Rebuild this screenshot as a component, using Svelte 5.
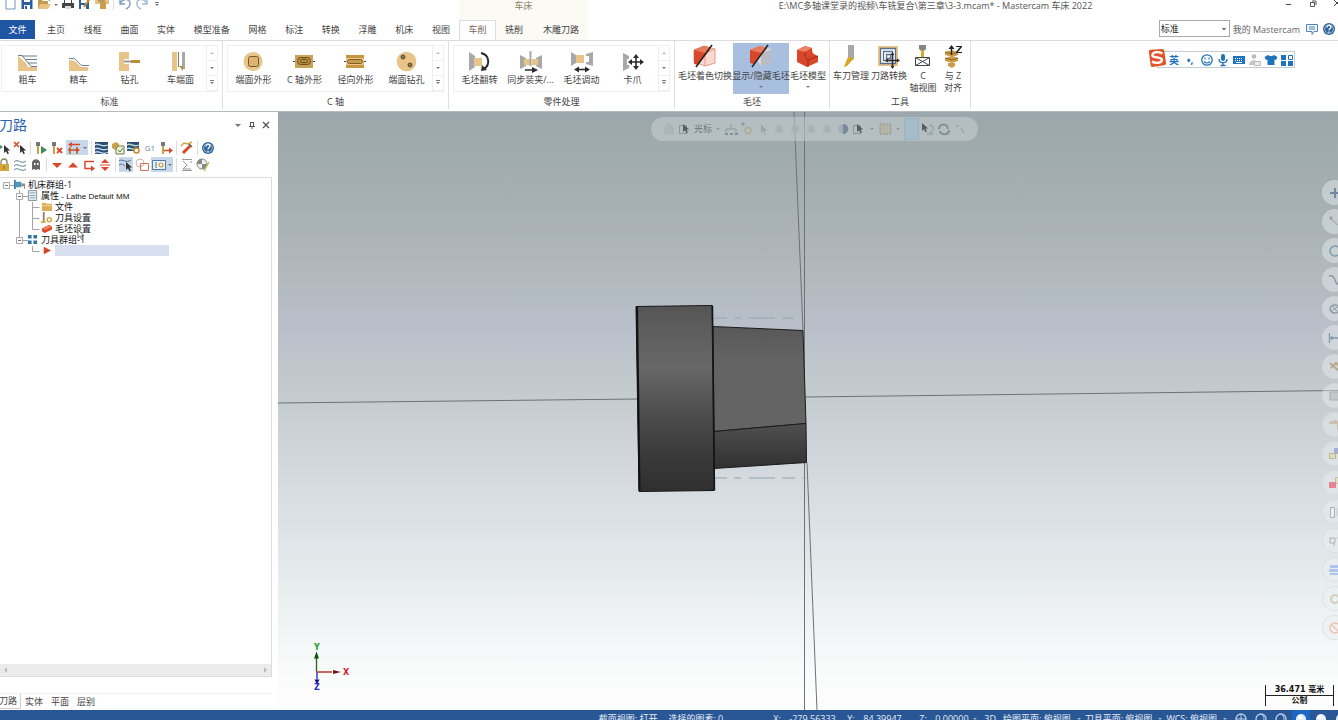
<script>
  const G = '#a8a8a8', T = '#e8c489', D = '#b98f3a', K = '#2b2b2b', R = '#d9482a', B = '#2a5f9e';
  const cursor = (x, y) => `<path d="M${x} ${y}v8l2-1.8 1.5 3 1.4-.7-1.4-2.9h2.7z" fill="#333"/>`;
  const bolt = `<path d="M2 1h4v4H5v8H3V5H2z" fill="#c5a24c"/><path d="M2 1h4v4H2z" fill="#777"/>`;

  const icons = {
    rough: `<path d="M1 5l8 7 2 4h9v4H1z" fill="${T}"/><path d="M1 4.500l4 0 9 11h6M5 5h15M8 8.500h12M11 12h9" fill="none" stroke="#6f7f8c"/>`,
    finish: `<path d="M1 9l6 1 6 6h7v4H1z" fill="${T}"/><path d="M1 7.500h4c4 0 6 7 10 7h6" fill="none" stroke="#6f7f8c"/>`,
    drill: `<path d="M0 1h10v7H5v5h5v7H0z" fill="${T}"/><path d="M5 10.500h9" stroke="#999" stroke-width="2"/><path d="M12 9h9v3h-9z" fill="${D}"/>`,
    facing: `<path d="M2 1h5v19H2z" fill="${T}"/><path d="M8.500 1v15" stroke="#777"/><path d="M12 1h3v17h-3z" fill="${G}"/><path d="M9 15h4v5z" fill="${D}"/>`,
    faceContour: `<circle cx="10" cy="10.500" r="9.500" fill="${T}"/><rect x="5.500" y="5.500" width="10" height="10" rx="2" fill="#dfb56d" stroke="#6c5a33"/>`,
    cContour: `<path d="M-1 10.500h22" stroke="#444"/><rect x="1" y="4" width="18" height="13" fill="#c9a25a"/><rect x="3.500" y="6.500" width="13" height="7" rx="3" fill="#b88c3d" stroke="#6c5220"/><rect x="6.500" y="8.500" width="7" height="3" rx="1" fill="none" stroke="#6c5220"/>`,
    radial: `<path d="M-1 10.500h22" stroke="#444"/><rect x="1" y="4" width="18" height="13" fill="${T}"/><path d="M1 4h18v3H1zM1 14h18v3H1z" fill="#c7963e"/><rect x="2.500" y="8.500" width="15" height="4" rx="2" fill="#c99c4c" stroke="#7c602a"/>`,
    faceDrill: `<circle cx="10.500" cy="10.500" r="9.800" fill="${T}"/><g fill="#8e7a4f" stroke="#574a2b"><circle cx="7" cy="6" r="2"/><circle cx="14" cy="14" r="2"/></g>`,
    flip: `<path d="M0 1l6 4v11l-6 4z" fill="${G}"/><path d="M5 7h8v8H5z" fill="${T}"/><path d="M12 2c9 2 9 12 3 16" fill="none" stroke="${K}" stroke-width="2"/><path d="M12 20l1-6 5 5z" fill="${K}"/>`,
    sync: `<path d="M0 4l6 3v8l-6 3zM22 4l-6 3v8l6 3z" fill="${G}"/><path d="M4 8h6v6H4zM12 8h6v6h-6z" fill="${T}"/><path d="M10.500 0v15" stroke="${G}" stroke-width="2"/><path d="M5 19h9" stroke="${K}" stroke-width="1.500"/><path d="M12 16l6 3-6 3z" fill="${K}"/>`,
    shift: `<path d="M0 1l5 3v8l-5 3zM22 1l-7 2v2h3v6h-3v2l7 2z" fill="${G}"/><path d="M5 4h8v8H5z" fill="${T}"/><path d="M6 18.500h10" stroke="${K}" stroke-width="1.600"/><path d="M3 18.500l5-3v6zM19 18.500l-5-3v6z" fill="${K}"/>`,
    chuck: `<path d="M1 2l6 3v3H5v6h2v3l-6 3z" fill="${G}"/><path d="M8 11h12M14 5v12" stroke="${K}" stroke-width="1.600"/><path d="M6 11l4-3v6zM22 11l-4-3v6zM14 3l3 4h-6zM14 19l3-4h-6z" fill="${K}"/>`,
    shade: `<path d="M1 5l10-4 11 3v14l-10 3-11-4z" fill="#fbd9d0" stroke="#e59a88"/><path d="M12 8v13M12 8l10-4" stroke="#e59a88"/><path d="M1 5l10-4 7 2L5 20l-4-1z" fill="${R}"/><path d="M1 5l10-4 7 2-2 3-4 2z" fill="#ea7a5c"/><path d="M19 0L3 22" stroke="#222" stroke-width="1.500"/>`,
    hide: `<path d="M1 5l10-4 11 3v14l-10 3z" fill="#d3d6da"/><path d="M12 8l10-3v13l-10 3z" fill="#b9bcc0"/><path d="M1 5l10-4 7 2L5 19l-4-1z" fill="${R}"/><path d="M1 5l10-4 7 2-2 3-4 2z" fill="#ea7a5c"/><path d="M19 0L3 22" stroke="#222" stroke-width="1.500"/>`,
    model: `<path d="M1 5l8-4 7 2c0 5 1 6 6 8v6l-11 5-10-5z" fill="${R}"/><path d="M1 5l8-4 7 2-7 4z" fill="#ef8265"/><path d="M9 7c0 5 1 7 3 8v7M12 15l10-4" fill="none" stroke="#9c2c14"/>`,
    tool: `<path d="M9 0h6v14l-3 2H9z" fill="${G}"/><path d="M9 12l6 1-7 8-3 1z" fill="#d9a51c"/>`,
    transform: `<rect x="1" y="1" width="20" height="20" fill="${T}"/><path d="M3.500 3.500h15v15h-15zM6.500 6.500h9v9h-9zM9.500 9.500h4v4h-4z" fill="#fff" stroke="#57708e" stroke-width="1.300"/><path d="M9 15.500h12M15.500 9v12" stroke="${K}" stroke-width="1.500"/><path d="M8 15.500l3-2v4zM23 15.500l-3-2v4zM15.500 7l2 3h-4zM15.500 24l2-3h-4z" fill="${K}"/>`,
    cview: `<path d="M8 0h7v4l-2 2h-3L8 4z" fill="#858585"/><path d="M10 5h3v8h-3z" fill="#d5ab2e"/><path d="M4.500 12.500h14v8h-14zM4.500 12.500l14 8M18.500 12.500l-14 8" fill="none" stroke="#444"/>`,
    alignz: `<path d="M4 7l7-2 6 2v3l-6 2-7-2zM4 13l7-2 6 2v3l-6 2-7-2zM7 18h7v3l-3 2-4-2z" fill="#cf9d45"/><path d="M4 7l7 2 6-2M4 13l7 2 6-2" fill="none" stroke="#8a6522"/><path d="M10.500 3v7" stroke="#222" stroke-width="1.300"/><path d="M10.500 0l3 4h-6zM15 1h6v1l-4 5h4v1h-6V7l4-5h-4z" fill="#222"/>`,

    file: `<path d="M3 0h6l3 3v10H3z" fill="#fff" stroke="#6f97bd"/><path d="M9 0v3h3" fill="none" stroke="#6f97bd"/>`,
    save: `<path d="M1.500 0h11v13h-11z" fill="${B}"/><path d="M4 1h6v5H4zM4 9h6v4H4z" fill="#fff"/><path d="M5 10h2v3H5z" fill="${B}"/>`,
    open: `<path d="M1 4h4l1 1h5v8H1z" fill="#c79a53"/><path d="M3 8h11l-3 5H1z" fill="#e9c384"/><path d="M9 3l4-2v4z" fill="#3f8b58"/>`,
    print: `<path d="M3.500 1.500h7v6h-7z" fill="#fff" stroke="#444"/><path d="M1 7h12v5H1z" fill="#444"/><path d="M4 10h6v3H4z" fill="#ddd"/>`,
    saveAs: `<path d="M1 2h10v11H1z" fill="${B}"/><path d="M3 3h6v4H3zM3 9h5v4H3z" fill="#fff"/><path d="M13 1L6 11" stroke="#c78e29" stroke-width="2"/>`,
    pack: `<path d="M0 3h14v5H0z" fill="#e6c183"/><path d="M5 6h6v7H5z" fill="#cc9d4e"/><path d="M3 5h7" stroke="#8e7130"/>`,
    undo: `<path d="M2 3v5h5M2 8c3-7 11-5 10 0 0 2-2 4-4 5" fill="none" stroke="#7c9dc2" stroke-width="1.400"/>`,
    redo: `<path d="M12 3v5H7M12 8C9 1 1 3 2 8c0 2 2 4 4 5" fill="none" stroke="#9bbdd6" stroke-width="1.400"/>`,

    selAll: `<path d="M0 2l6 4-6 4z" fill="#3a8d5a"/>${cursor(7, 4)}`,
    deselAll: `<path d="M1 1l5 5M6 1L1 6" stroke="${R}" stroke-width="1.600"/>${cursor(7, 4)}`,
    regen: `${bolt}<path d="M7 5l6 4-6 4z" fill="#3a8d5a"/>`,
    regenX: `${bolt}<path d="M7 7l5 5M12 7l-5 5" stroke="${R}" stroke-width="1.800"/>`,
    regenSel: `<path d="M3 6v7M10 6v7" stroke="#a98b45" stroke-width="2"/><path d="M4 3.500h9M1 9h8" stroke="${R}" stroke-width="1.300"/><path d="M5 1v5L1 3.500zM9 6.500v5l4-2.500z" fill="${R}"/>`,
    waves: `<path d="M0 1h13v12H0z" fill="#2c4f73"/><path d="M0 4c4-3 6 3 13 0M0 8c4-3 6 3 13 0M0 11.500c4-3 6 3 13 0" fill="none" stroke="#c4dcef" stroke-width="1.300"/>`,
    verify: `<path d="M1 3l4-2 3 2v4l-4 2-3-2z" fill="#c9a348"/><path d="M7 5h6v8H5V8z" fill="#eef0da" stroke="#737a51"/><path d="M7 9l2 2 3-4" fill="none" stroke="#4c8a3c"/>`,
    simul: `<path d="M0 1h12v9H0z" fill="#2c4f73"/><path d="M0 4c4-3 6 3 12 0M0 8c4-3 6 3 12 0" fill="none" stroke="#b9e0d0" stroke-width="1.300"/><circle cx="9.500" cy="9.500" r="2.500" fill="#fff" stroke="#c28b2d" stroke-width="1.500"/>`,
    feed: `${bolt}<path d="M5 9.500h6" stroke="${R}" stroke-width="1.500"/><path d="M10 6.500l4 3-4 3z" fill="${R}"/>`,
    wand: `<path d="M3 12l7-7" stroke="${R}" stroke-width="3"/><path d="M1 5l3-3 4 1 4-2" fill="none" stroke="#d8a23a" stroke-width="1.500"/><path d="M9 3l3 3" stroke="#555" stroke-width="1.500"/>`,
    help: `<circle cx="7" cy="7" r="6" fill="#2f6299"/><circle cx="7" cy="7" r="4.300" fill="none" stroke="#b9cfe4" stroke-width=".8"/><path d="M5 5.500c0-3 4-2.500 4-.4C9 6.500 7 6.500 7 8.300M7 9.500v1.300" fill="none" stroke="#fff" stroke-width="1.300"/>`,
    lock: `<path d="M4 6V4c0-4 6-4 6 0v2" fill="none" stroke="#8a8058" stroke-width="1.300"/><path d="M2 6h10v7H2z" fill="#d3a83d"/><path d="M7 8v3" stroke="#86691c"/>`,
    waves2: `<path d="M1 4c4-4 7 3 12-1M1 8c4-4 7 3 12-1M1 12c4-4 7 3 12-1" fill="none" stroke="#577d88"/>`,
    ghost: `<path d="M3 12V5c0-5 8-5 8 0v7l-2-1-2 1-2-1z" fill="#666"/><path d="M5 5h1.500v2H5zM8 5h1.500v2H8z" fill="#fff"/>`,
    down: `<path d="M2 5h10l-5 5z" fill="${R}"/>`,
    up: `<path d="M2 9.500h10l-5-5z" fill="${R}"/>`,
    insert: `<path d="M12 3.500H3v7h7" fill="none" stroke="${R}" stroke-width="1.500"/><path d="M9 7.500l4 3-4 3z" fill="${R}"/>`,
    updown: `<path d="M3 5h8L7 1zM3 9h8l-4 4z" fill="${R}"/><path d="M2 7h10" stroke="${R}"/>`,
    pickWave: `<path d="M0 3c4-3 7 3 12-1M0 7c3-2 4 0 6 1" fill="none" stroke="#4e7390"/>${cursor(7, 4)}`,
    shapes: `<circle cx="5" cy="5" r="4" fill="none" stroke="#d4b3a8"/><path d="M5.500 5.500h8v7h-8z" fill="none" stroke="#d76d5b"/>`,
    panel: `<path d="M.5 2.500h13v9H.5z" fill="#eef4fa" stroke="#4c7ba8"/><path d="M3 5h2M3 7h2M3 9h2" stroke="#3d6b99"/><circle cx="9" cy="7" r="2" fill="none" stroke="#cf9c33" stroke-width="1.200"/>`,
    sheet: `<path d="M2 1.500h10M2 12.500h10M3 3l4 4-4 4h8M11 3v2" fill="none" stroke="#999"/>`,
    colorw: `<circle cx="6" cy="6" r="5" fill="#eee" stroke="#888"/><path d="M6 1v5H1c0-3 2-5 5-5zM6 6h5c0 3-2 5-5 5z" fill="#888"/><path d="M13 4L8 13" stroke="#b5c24a" stroke-width="1.500"/>`,

    lathe: `<path d="M0 1h2v10H0z" fill="#3c7ba8"/><path d="M2 3h6v6H2z" fill="#4f97b8"/><path d="M8 5h4v6h-1V8H8z" fill="#8d8d8d"/>`,
    props: `<path d="M1.500.5h9v11h-9z" fill="#dfe9f0" stroke="#82919b"/><path d="M3 3h6M3 6h6M3 8.500h6" stroke="#8ea5b4"/>`,
    folder: `<path d="M1 2h4l1 1h6v8H1z" fill="#dcae5a"/><path d="M1 5h11" stroke="#f2d79a"/>`,
    toolset: `<path d="M2 0h2v9l-2 3z" fill="#8d8567"/><path d="M0 10h5v2H0z" fill="#d6aa39"/><circle cx="9" cy="8.500" r="2.300" fill="none" stroke="#d0a234" stroke-width="1.500"/>`,
    stock: `<path d="M1 6l8-4 3 2v3l-8 4-3-2z" fill="#da4a2a"/><path d="M2 6l7-3.500L11.500 4l-7 3.500z" fill="#ef8466"/>`,
    group: `<path d="M1 1h4v4H1zM7 1h4v4H7zM1 7h4v4H1zM7 7h4v4H7z" fill="#2f75ad"/>`,
    play: `<path d="M3 2l8 4-8 4z" fill="#d6472a"/>`,

    chat: `<path d="M1.500 2.500h11v7H9l-2 3v-3H1.500z" fill="#eef5fb" stroke="#5486b8"/><path d="M4 5h6M4 7h6" stroke="#5486b8"/>`,
    smile: `<circle cx="7" cy="7" r="5.200" fill="none" stroke="#1f73bd" stroke-width="1.300"/><path d="M5 4.500v2M9 4.500v2M4 8.500c2 2 4 2 6 0" fill="none" stroke="#1f73bd" stroke-width="1.100"/>`,
    mic: `<rect x="5" y="1" width="4" height="7" rx="2" fill="#1f73bd"/><path d="M3 6c0 5 8 5 8 0M7 10v3M4.500 12.500h5" fill="none" stroke="#1f73bd" stroke-width="1.300"/>`,
    keys: `<rect x="1" y="3" width="12" height="8" fill="#1f73bd"/><path d="M3 5.500h8M3 7.500h8" stroke="#fff" stroke-dasharray="1 1"/><path d="M4 9.500h6" stroke="#fff"/>`,
    person: `<circle cx="6" cy="3.500" r="2.300" fill="#bbb"/><path d="M1 12c0-6 9-6 9-2v2z" fill="#c4c4c4"/><path d="M6.500 8.500h6v4h-6z" fill="#eee" stroke="#bbb"/>`,
    shirt: `<path d="M4 2c2 1.500 4 1.500 6 0l3.500 2-1.500 3-1.500-.5V12h-7V6.500L2 7 .5 4z" fill="#1f73bd"/>`,
    apps: `<path d="M1 2h5v5H1zM1 8h5v5H1zM8 8h5v5H8z" fill="#1f73bd"/><path d="M8.500 2.500h4v4h-4z" fill="none" stroke="#1f73bd"/>`,

    fLock: `<path d="M4 6V4c0-3 5-3 5 0v2M3 6h8v6H3z" fill="#aeb3b5" stroke="#a3a8aa"/>`,
    fCursor: `<path d="M1.500 3.500h7v8h-7z" fill="none" stroke="#76858e"/>${cursor(5, 2)}`,
    fXyz: `<path d="M7 7V2M2 11V7h10v4" fill="none" stroke="#7c8b94"/><path d="M1 12h3M6 12h3M11 12h3" stroke="#6f7e88" stroke-width="2"/>`,
    fGear: `<path d="M1 2h4M3 0v4" stroke="#6e7c85"/><circle cx="8" cy="8.500" r="3" fill="none" stroke="#b1a67e" stroke-width="1.600"/>`,
    fArrow: `<path d="M5 2v9l2-2 2 4 1-1-2-3h3z" fill="#8f9aa1"/>`,
    fBlob: `<circle cx="7" cy="7" r="4" fill="#a4afb5"/>`,
    fHalf: `<circle cx="7" cy="7" r="5" fill="#9da9b4"/><path d="M7 2c7 0 7 10 0 10z" fill="#64768a"/>`,
    fBox: `<path d="M2 2h11v10H2z" fill="#b7b09b" stroke="#8b8671" stroke-dasharray="2 1"/>`,
    fSwap: `<path d="M8 3c4 0 5 3 4 6M6 12h5M9 9l3 3" fill="none" stroke="#8c9aa2" stroke-width="1.300"/>${cursor(1, 1)}`,
    fSpin: `<path d="M2 7c0-6 9-6 9 0M12 8c0 6-9 5-9 1" fill="none" stroke="#6d7b85" stroke-width="2"/>`,
    fMini: `<path d="M3 4h3M8 6l3 5" stroke="#8e9aa1" stroke-width="1.300"/>`,

    rPlus: `<path d="M7 2v10M2 7h10" stroke="#72899b" stroke-width="2"/>`,
    rLine: `<path d="M2 3l10 9M1 3h4M3 1v4" stroke="#8d9da6" fill="none"/>`,
    rCircle: `<circle cx="7" cy="7" r="5" fill="none" stroke="#7f9cae" stroke-width="1.600"/>`,
    rCurve: `<path d="M1 3c8-2 4 9 11 9" fill="none" stroke="#8398a7" stroke-width="1.400"/>`,
    rNo: `<ellipse cx="7" cy="7" rx="5" ry="4" fill="none" stroke="#8a9aa5" stroke-width="1.400"/><path d="M3 9l8-5M4 4l6 6" stroke="#8a9aa5"/>`,
    rDim: `<path d="M1.500 2v10M12.500 2v10M2 7h10M4 5v4" fill="none" stroke="#8597a8" stroke-width="1.300"/>`,
    rPen: `<path d="M2 3l9 8M3 8l5-5 4 4" fill="none" stroke="#b7a98d" stroke-width="2"/>`,
    rRect: `<path d="M2 3h10v8H2z" fill="#c2c9c8" stroke="#a5b0b1"/>`,
    rCube: `<path d="M1 4l6-2 6 2v6l-4 2V6L1 6z" fill="#cdbfae"/>`,
    rTwo: `<path d="M6 1h7v6H6z" fill="#a4aed0"/><path d="M1.500 6.500h6v5h-6z" fill="#dedbc0" stroke="#c1b78d"/>`,
    rRed: `<path d="M7.500 1.500h6v6h-6z" fill="#e5dfc2" stroke="#cbbf97"/><path d="M1 6h7v6H1z" fill="#e88292"/>`,
    rBars: `<path d="M2.500 2.500h4v10h-4z" fill="#edf0f1" stroke="#a9b0b6"/><path d="M9 3v8" stroke="#c6cbd0"/>`,
    rGrid: `<path d="M2 4h5v5H2zM9 4h4v5M6 9v3" fill="none" stroke="#adb0b8"/>`,
    rLayers: `<path d="M2 2h10v3H2zM1 6h12v3H1zM2 10h10v2H2z" fill="#aec5ea"/>`,
    rGear: `<circle cx="7" cy="7" r="4" fill="none" stroke="#d2cfb9" stroke-width="2"/>`,
    rBan: `<circle cx="7" cy="7" r="5" fill="none" stroke="#edc1b0" stroke-width="1.400"/><path d="M3.500 3.500l7 7" stroke="#edc1b0" stroke-width="1.400"/>`,

    sGlobe: `<circle cx="7" cy="7" r="5" fill="none" stroke="#b9cfe9" stroke-width="1.300"/><path d="M7 2v10M2 7h10" stroke="#b9cfe9"/>`,
    sRing: `<circle cx="7" cy="7" r="5" fill="none" stroke="#b9cfe9" stroke-width="1.300"/><path d="M7 2c4 2 4 8 0 10" fill="none" stroke="#b9cfe9"/>`,
    sBall: `<circle cx="7" cy="7" r="5" fill="#e6eef7"/><circle cx="6" cy="5" r="2" fill="#fff"/>`
  };

  const tabs = ['主页', '线框', '曲面', '实体', '模型准备', '网格', '标注', '转换', '浮雕', '机床', '视图'];
  const galleries = [
    { name: '标准', items: [['rough', '粗车'], ['finish', '精车'], ['drill', '钻孔'], ['facing', '车端面']] },
    { name: 'C 轴', items: [['faceContour', '端面外形'], ['cContour', 'C 轴外形'], ['radial', '径向外形'], ['faceDrill', '端面钻孔']] },
    { name: '零件处理', items: [['flip', '毛坯翻转'], ['sync', '同步装夹/...'], ['shift', '毛坯调动'], ['chuck', '卡爪']] }
  ];
  const row1 = ['selAll', 'deselAll', '|', 'regen', 'regenX', '*regenSel', '|', 'waves', 'verify', 'simul', 'G1', 'feed', '|', 'wand', '|', 'help'];
  const row2 = ['lock', 'waves2', 'ghost', '|', 'down', 'up', 'insert', 'updown', '|', '!pickWave', 'shapes', '*panel', '|', 'sheet', 'colorw'];
  const sideTools = ['rPlus', 'rLine', 'rCircle', 'rCurve', 'rNo', 'rDim', 'rPen', 'rRect', 'rCube', 'rTwo', 'rRed', 'rBars', 'rGrid', 'rLayers', 'rGear', 'rBan'];
  let mode = $state('标准');
</script>

{#snippet icon(name, size = 14)}
  <svg class="icon" width={size} height={size} viewBox="0 0 {size} {size}" aria-hidden="true">{@html icons[name]}</svg>
{/snippet}

{#snippet toolrow(list)}
  <div class="toolrow">
    {#each list as t}
      {#if t === '|'}<i class="sep"></i>
      {:else if t === 'G1'}<button class="g1">G1</button>
      {:else if t[0] === '*'}<button class="on wide" aria-label={t.slice(1)}>{@render icon(t.slice(1))}<i class="caret"></i></button>
      {:else if t[0] === '!'}<button class="on" aria-label={t.slice(1)}>{@render icon(t.slice(1))}</button>
      {:else}<button aria-label={t}>{@render icon(t)}</button>{/if}
    {/each}
  </div>
{/snippet}

<div class="app">
  <header class="title">
    <div class="qat">
      <button aria-label="new">{@render icon('file')}</button>
      <button aria-label="save">{@render icon('save')}</button>
      <button aria-label="open">{@render icon('open')}</button>
      <i class="caret"></i>
      <button aria-label="print">{@render icon('print')}</button>
      <button aria-label="save as">{@render icon('saveAs')}</button>
      <button aria-label="zip">{@render icon('pack')}</button>
      <i class="rule"></i>
      <button aria-label="undo">{@render icon('undo')}</button>
      <button aria-label="redo">{@render icon('redo')}</button>
      <i class="caret bar"></i>
    </div>
    <div class="context">车床</div>
    <h1>E:\MC多轴课堂录的视频\车铣复合\第三章\3-3.mcam* - Mastercam 车床 2022</h1>
    <div class="win">
      <button aria-label="minimize"><svg width="8" height="8"><path d="M1 4.500h5" stroke="#444" /></svg></button>
      <button aria-label="restore"><svg width="8" height="8"><path d="M1.500 2.500h4v4h-4zM3 1h4v4" fill="none" stroke="#555" /></svg></button>
      <button aria-label="close"><svg width="8" height="8"><path d="M1 0l6 6M7 0L1 6" stroke="#444" /></svg></button>
    </div>
  </header>

  <div class="tabs">
    <button class="filetab">文件</button>
    <nav>{#each tabs as t}<button>{t}</button>{/each}</nav>
    <div class="ctabs">
      <button class="active">车削</button>
      <button>铣削</button>
      <button>木雕刀路</button>
    </div>
    <div class="account">
      <select bind:value={mode} aria-label="模式"><option>标准</option></select>
      <a href="#my">我的 Mastercam</a>
      <button aria-label="feedback">{@render icon('chat')}</button>
      <button aria-label="help">{@render icon('help')}</button>
    </div>
  </div>

  <section class="ribbon">
    {#each galleries as g}
      <div class="group">
        <div class="gallery">
          {#each g.items as [ic, label]}
            <button class="item">{@render icon(ic, 22)}<span>{label}</span></button>
          {/each}
          <div class="scroll">
            <button aria-label="up"><i class="caret flip dim"></i></button>
            <button aria-label="down"><i class="caret"></i></button>
            <button aria-label="more"><i class="caret bar"></i></button>
          </div>
        </div>
        <h2>{g.name}</h2>
      </div>
    {/each}
    <div class="group big">
      <div class="buttons">
        <button class="w56">{@render icon('shade', 24)}<span>毛坯着色切换</span></button>
        <button class="w56 on">{@render icon('hide', 24)}<span>显示/隐藏毛坯</span><i class="caret"></i></button>
        <button class="w38">{@render icon('model', 24)}<span>毛坯模型</span><i class="caret"></i></button>
      </div>
      <h2>毛坯</h2>
    </div>
    <div class="group big">
      <div class="buttons">
        <button class="w38">{@render icon('tool', 24)}<span>车刀管理</span></button>
        <button class="w38">{@render icon('transform', 24)}<span>刀路转换</span></button>
        <button class="w30">{@render icon('cview', 24)}<span>C<br />轴视图</span></button>
        <button class="w30">{@render icon('alignz', 24)}<span>与 Z<br />对齐</span></button>
      </div>
      <h2>工具</h2>
    </div>
    <div class="ime">
      <svg class="sogou" width="20" height="20" viewBox="0 0 22 22" aria-hidden="true">
        <path d="M2 4q0-2 2-2L17 1q2 0 2 2l2 14q0 2-2 2L6 21q-2 0-2-2z" fill="#e2532b" />
        <path d="M17 6C11 3 5 5 6 8.500 7 11 16 9.500 16.500 13 16.500 17 9 17 5.500 15" fill="none" stroke="#fff" stroke-width="2.600" />
      </svg>
      <b>英</b><b>•,</b>
      {#each ['smile', 'mic', 'keys', 'person', 'shirt', 'apps'] as t}<button aria-label={t}>{@render icon(t)}</button>{/each}
    </div>
  </section>

  <main>
    <aside>
      <div class="phead">
        <h2>刀路</h2>
        <button aria-label="options"><i class="caret large"></i></button>
        <button aria-label="pin"><svg width="8" height="8"><path d="M2.500 1v4M5.500 1v4M2 1.500h4M1 5.500h6M4 5.500v3" stroke="#555" fill="none" /></svg></button>
        <button aria-label="close"><svg width="8" height="8"><path d="M1 1l6 6M7 1L1 7" stroke="#555" stroke-width="1.300" /></svg></button>
      </div>
      {@render toolrow(row1)}
      {@render toolrow(row2)}
      <div class="tree">
        <svg class="lines" width="60" height="80" viewBox="0 0 60 80" aria-hidden="true">
          <path d="M9 7.500h6M19.500 12v50M23 18.500h5M32.500 24v27.500M32.500 29.500h7M32.500 40.500h7M32.500 51.500h7M23 62.500h5M32.500 68v5.500h7" fill="none" stroke="#a5a5a5" />
          <g fill="#fff" stroke="#aaa"><path d="M3.500 4.500h6v6h-6zM16.500 15.500h6v6h-6zM16.500 59.500h6v6h-6z" /></g>
          <path d="M5 7.500h3M18 18.500h3M18 62.500h3" stroke="#777" />
        </svg>
        <ul>
          <li class="l1">{@render icon('lathe', 12)}<span>机床群组-1</span></li>
          <li class="l2">{@render icon('props', 12)}<span>属性 <small>- Lathe Default MM</small></span></li>
          <li class="l3">{@render icon('folder', 12)}<span>文件</span></li>
          <li class="l3">{@render icon('toolset', 12)}<span>刀具设置</span></li>
          <li class="l3">{@render icon('stock', 12)}<span>毛坯设置</span></li>
          <li class="l2">{@render icon('group', 12)}<span>刀具群组-1</span></li>
          <li class="l3">{@render icon('play', 12)}<span class="slot"></span></li>
        </ul>
        <svg class="pointer" width="9" height="12" aria-hidden="true"><path d="M1 1v8l2-2 1.500 3.500 1.500-.7L4.500 6.500H7z" fill="#fff" stroke="#555" stroke-width=".8" /></svg>
      </div>
      <div class="hscroll"><i></i><i></i></div>
      <div class="ptabs">
        <button class="active">刀路</button><button>实体</button><button>平面</button><button>层别</button>
      </div>
    </aside>

    <div class="view">
      <svg class="scene" viewBox="278 111 1060 599" preserveAspectRatio="xMidYMid slice" aria-hidden="true">
        <defs>
          <linearGradient id="disc" x1="0" y1="0" x2="0" y2="1">
            <stop offset="0" stop-color="#555" /><stop offset=".08" stop-color="#5a5a5a" /><stop offset=".33" stop-color="#686868" />
            <stop offset=".55" stop-color="#505050" /><stop offset=".8" stop-color="#3a3a3a" /><stop offset="1" stop-color="#2f2f2f" />
          </linearGradient>
          <linearGradient id="boss" x1="0" y1="0" x2="0" y2="1">
            <stop offset="0" stop-color="#585858" /><stop offset=".3" stop-color="#636363" /><stop offset="1" stop-color="#646464" />
          </linearGradient>
          <linearGradient id="flat" x1="0" y1="0" x2="0" y2="1">
            <stop offset="0" stop-color="#505050" /><stop offset="1" stop-color="#303030" />
          </linearGradient>
        </defs>
        <g stroke="#6b7276" stroke-width="1" fill="none">
          <path d="M278 402.500L637 398.500M806 396.500L1338 390M794 111L803 330M804.500 111V710M807 462L817 710" />
        </g>
        <path d="M714 317.500H794M714 477.500H806" stroke="#94a6b0" stroke-dasharray="13 7 7 8 26 7" />
        <path d="M636 306L712 305 714 490 639 491z" fill="url(#disc)" stroke="#181818" />
        <path d="M637 306L639.500 490" stroke="#111" stroke-width="2" />
        <path d="M713 326L803 330 806 423 714 431z" fill="url(#boss)" stroke="#1b1b1b" />
        <path d="M714 431L806 423 806.500 462 714 468z" fill="url(#flat)" stroke="#1b1b1b" />
        <path d="M712.500 305L714.500 490" stroke="#151515" stroke-width="1.400" />
        <path d="M316.500 671V655" stroke="#1a6a1a" stroke-width="1.300" /><path d="M316.500 651l2.500 7h-5z" fill="#0d520d" />
        <path d="M316 671.500H332" stroke="#b01818" stroke-width="1.300" /><path d="M341 671.500l-8 2v-4z" fill="#801010" />
        <path d="M317 672V679" stroke="#2222c0" stroke-width="1.300" /><path d="M317 684l2.500-5h-5z" fill="#11118a" />
        <g class="axis"><text x="314" y="649" fill="#1ca01c">Y</text><text x="343" y="674" fill="#d0202a">X</text><text x="314" y="689" fill="#2a2ad0">Z</text></g>
      </svg>

      <div class="selbar">
        {@render icon('fLock')}
        <button class="cur">{@render icon('fCursor')}光标<i class="caret"></i></button>
        {#each ['fXyz', 'fGear', 'fArrow', 'fBlob', 'fBlob', 'fBlob', 'fBlob', 'fHalf', 'fCursor'] as t}<button aria-label={t}>{@render icon(t)}</button>{/each}
        <i class="caret"></i>
        <button aria-label="window">{@render icon('fBox')}</button>
        <i class="caret"></i>
        <span class="blue"></span>
        {#each ['fSwap', 'fSpin', 'fMini'] as t}<button aria-label={t}>{@render icon(t)}</button>{/each}
      </div>

      <div class="rail">{#each sideTools as t}<button aria-label={t}>{@render icon(t)}</button>{/each}</div>

      <div class="scale"><span>36.471 毫米</span><i></i><span>公制</span></div>
    </div>
  </main>

  <footer>
    <div class="status">
      <span class="s1">截面视图: 打开</span>
      <span class="s2">选择的图素: 0</span>
      <span class="s3">X:</span><span class="s4">-279.56333</span>
      <span class="s3">Y:</span><span class="s6">84.39947</span>
      <span class="s3">Z:</span><span class="s8">0.00000</span>
      <i class="caret"></i>
      <span class="s9">3D</span>
      <span class="s10">绘图平面: 俯视图</span><i class="caret"></i>
      <span class="s10">刀具平面: 俯视图</span><i class="caret"></i>
      <span class="s10">WCS: 俯视图</span><i class="caret"></i>
      <div class="modes">
        <button aria-label="wire">{@render icon('sGlobe')}</button>
        <button aria-label="hidden">{@render icon('sRing')}</button>
        <button aria-label="outline">{@render icon('sRing')}</button>
        <button class="on" aria-label="shaded">{@render icon('sBall')}</button>
        <button aria-label="material">{@render icon('sBall')}</button>
        <button aria-label="translucent">{@render icon('sBall')}</button>
      </div>
    </div>
  </footer>
</div>

<style>
  :global(body) { margin: 0; }
  .app {
    display: flex; flex-direction: column; height: 100vh; overflow: hidden; background: #fff;
    font: 9px/12px "Open Sans", "Noto Sans CJK SC", sans-serif; color: #444;
  }
  .app * { box-sizing: border-box; }
  button { font: inherit; color: inherit; background: none; border: 0; padding: 0; margin: 0; white-space: nowrap; display: flex; align-items: center; justify-content: center; }
  h1, h2, ul { margin: 0; padding: 0; font: inherit; }
  a { color: inherit; text-decoration: none; }
  svg { display: block; flex: none; }
  .icon { overflow: visible; }
  .caret { flex: none; width: 0; height: 0; border: 2px solid transparent; border-top-color: #777; border-bottom-width: 0; }
  .caret.flip { transform: rotate(180deg); }
  .caret.dim { opacity: .5; }
  .caret.large { border-width: 3px 3px 0; }
  .caret.bar { position: relative; }
  .caret.bar::before { content: ""; position: absolute; left: -2px; top: -4px; width: 4px; height: 1px; background: #777; }

  .title { display: flex; flex: 0 0 20px; }
  .qat { flex: 0 0 459px; display: flex; align-items: center; gap: 3px; height: 14px; margin-top: -4px; padding-left: 3px; }
  .qat .caret { margin: 4px 0 0; }
  .qat .rule { width: 1px; height: 14px; background: #ddd; margin: 0 1px; }
  .qat .caret:last-child { margin-left: 3px; }
  .context { flex: 0 0 129px; text-align: center; background: #fbfaf5; color: #8b7d68; }
  h1 { flex: 1; text-align: center; white-space: nowrap; color: #555; }
  .win { flex: 0 0 58px; display: flex; align-items: flex-start; justify-content: space-between; padding-left: 2px; margin-right: -3px; }

  .tabs { display: flex; flex: 0 0 20px; border-bottom: 1px solid #dcdcdc; }
  .filetab { flex: 0 0 35px; background: #1f56a3; color: #fff; height: 19px; }
  nav { flex: 0 0 424px; display: flex; justify-content: space-between; padding: 0 9px 0 12px; }
  .ctabs { flex: 0 0 129px; display: flex; gap: 20px; background: #fbfaf5; }
  .ctabs .active { width: 37px; height: 20px; margin-right: -11px; padding-bottom: 2px; background: #fff; border: 1px solid #ddd; border-bottom: 0; color: #7a6a55; }
  .account { margin-left: auto; display: flex; align-items: flex-start; gap: 3px; padding-right: 2px; color: #666; }
  .account a { margin-right: 2px; white-space: nowrap; padding-top: 4px; }
  .account button { padding-top: 2px; }
  select { appearance: none; width: 71px; height: 17px; border: 1px solid #aaa; border-radius: 0; padding: 0 1px; font: inherit; color: #222;
    background: linear-gradient(45deg, transparent 50%, #777 50%) 62px 7px / 2px 2px no-repeat, linear-gradient(-45deg, transparent 50%, #777 50%) 64px 7px / 2px 2px no-repeat, #fff; }

  .ribbon { position: relative; display: flex; flex: 0 0 71px; border-bottom: 1px solid #b4babe; padding-bottom: 2px; }
  .group { display: flex; flex-direction: column; border-right: 1px solid #e0e0e0; padding: 4px 4px 0; }
  .group:first-child { padding-left: 1px; }
  .group h2 { text-align: center; margin-top: auto; line-height: 15px; }
  .gallery { display: flex; height: 47px; border: 1px solid #f0f0f0; }
  .item { width: 51px; flex-direction: column; }
  .item span { line-height: 14px; }
  .scroll { width: 11px; display: flex; flex-direction: column; border-left: 1px solid #eee; }
  .scroll button { flex: 1; border-bottom: 1px solid #f0f0f0; }
  .big { padding: 2px 2px 0; }
  .buttons { display: flex; }
  .buttons button { flex-direction: column; justify-content: flex-start; height: 51px; padding-top: 2px; }
  .buttons .icon { margin-bottom: 1px; }
  .buttons .caret { margin-top: 4px; }
  .buttons .on { background: #a9bfdf; }
  .w56 { width: 56px; } .w38 { width: 38px; } .w30 { width: 30px; }
  .ime { position: absolute; right: 43px; top: 10px; height: 17px; display: flex; align-items: center; gap: 2px; border: 1px solid #c4ccd4; padding-left: 10px; background: #fff; color: #1f73bd; }
  .ime b { font-size: 10px; width: 12px; text-align: center; margin-right: 2px; }
  .sogou { position: absolute; left: -11px; top: -4px; }

  main { flex: 1; display: flex; min-height: 0; }
  aside { flex: 0 0 278px; display: flex; flex-direction: column; padding-right: 6px; min-width: 0; }
  .phead { display: flex; align-items: center; gap: 6px; height: 27px; padding: 0 2px 1px 0; }
  .phead h2 { flex: 1; font-size: 14px; line-height: 20px; color: #2c64ae; margin-left: -1px; }
  .phead button { width: 8px; }
  .toolrow { display: flex; align-items: center; gap: 2px; height: 17px; margin-left: -3px; }
  .toolrow button { width: 14px; height: 15px; }
  .toolrow .wide { width: 22px; gap: 2px; }
  .toolrow .on { background: #c9d7ea; }
  .toolrow .sep { width: 1px; height: 14px; background: #ddd; margin: 0 1px; }
  .toolrow .g1 { color: #6b8a9a; font-size: 8px; }
  .tree { position: relative; flex: 1; border: 1px solid #ddd; border-left: 0; border-bottom: 0; margin-top: 4px; color: #111; }
  .lines { position: absolute; left: 0; top: 0; }
  ul { list-style: none; padding-top: 1px; }
  li { display: flex; align-items: center; gap: 3px; height: 11px; white-space: nowrap; position: relative; }
  li .icon { width: 11px; height: 11px; }
  .l1 { padding-left: 14px; } .l2 { padding-left: 27px; } .l3 { padding-left: 41px; }
  small { font: 8px "Liberation Sans", sans-serif; }
  .slot { width: 114px; height: 11px; background: #d8e0f0; }
  .pointer { position: absolute; left: 77px; top: 51px; }
  .hscroll { display: flex; justify-content: space-between; align-items: center; height: 13px; background: #ececec; padding: 0 4px; border-right: 1px solid #ddd; border-bottom: 1px solid #ddd; }
  .hscroll i { border: 3px solid transparent; border-left: 0; border-right-color: #bbb; }
  .hscroll i:last-child { transform: rotate(180deg); }
  .ptabs { display: flex; margin-top: 16px; height: 17px; border-top: 1px solid #eee; }
  .ptabs button { width: 26px; height: 15px; }
  .ptabs .active { width: 21px; border: 1px solid #ccc; border-top: 0; border-left: 0; justify-content: flex-end; padding-right: 3px; }

  .view { position: relative; flex: 1; overflow: hidden; min-width: 0;
    background: linear-gradient(#9ba7ac 0, #a7b0b3 16%, #b2bac0 28%, #b9c0ca 37%, #c2c9cd 45%, #cdd3d8 55%, #dbe1e5 68%, #e9eeef 80%, #f5f8f8 90%, #fdfdfd 97%); }
  .scene { position: absolute; inset: 0; width: 100%; height: 100%; }
  .axis { font: bold 8px "DejaVu Sans", sans-serif; }
  .selbar { position: absolute; left: 373px; top: 5px; height: 24px; display: flex; align-items: center; gap: 2px; padding: 0 11px; border-radius: 12px; background: rgba(200, 208, 210, .55); color: #68757d; }
  .selbar .icon { opacity: .7; }
  .selbar button { width: 14px; }
  .selbar .cur { width: auto; gap: 2px; }
  .selbar .caret { opacity: .6; margin: 0 2px; }
  .blue { width: 15px; height: 22px; background: #a5bccb; border: 1px solid #9ab3c4; }
  .rail { position: absolute; right: -9px; top: 68px; display: flex; flex-direction: column; gap: 4px; }
  .rail button { width: 25px; height: 25px; border-radius: 50%; background: rgba(235, 240, 240, .45); border: 1px solid rgba(205, 210, 214, .5); }
  .scale { position: absolute; right: 4px; bottom: 4px; width: 69px; border: solid #222; border-width: 0 1px; text-align: center; font: bold 8px/10px "DejaVu Sans", "Noto Sans CJK SC", sans-serif; color: #111; display: flex; flex-direction: column; }
  .scale i { height: 1px; background: #222; }

  footer { flex: 0 0 10px; background: #295795; color: #e8eef7; overflow: hidden; }
  .status { display: flex; align-items: center; justify-content: flex-end; height: 18px; white-space: nowrap; }
  .status .caret { border-top-color: #9db6d8; margin: 0 4px; }
  .s1 { margin-right: 11px; } .s2 { margin-right: 50px; }
  .s3 { width: 16px; }
  .s4 { width: 58px; } .s6 { width: 56px; } .s8 { width: 34px; }
  .s9 { margin: 0 7px 0 3px; }
  .s10 { margin: 0 2px 0 0; }
  .modes { display: flex; gap: 2px; margin: 0 -12px 0 1px; }
  .modes button { width: 18px; height: 18px; }
  .modes .on { background: #1d67c4; }
</style>
